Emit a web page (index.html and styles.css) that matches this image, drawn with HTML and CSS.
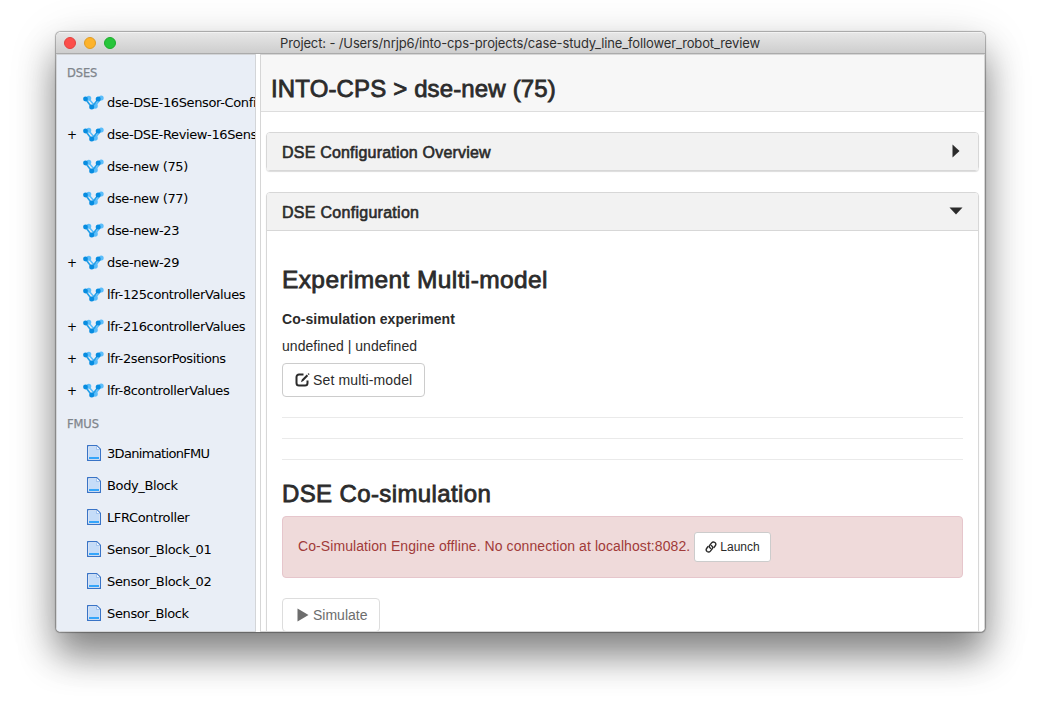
FILE: index.html
```html
<!DOCTYPE html>
<html lang="en">
<head>
<meta charset="utf-8">
<title>INTO-CPS</title>
<link rel="stylesheet" href="styles.css">
</head>
<body>
<svg class="defs" width="0" height="0">
  <symbol id="dse" viewBox="0 0 22 18">
    <g fill="#5bbdfa" stroke="#5bbdfa" stroke-width="1.6">
      <path d="M6.5 4.5 13 12 19.500 4" fill="none"/>
      <circle cx="6.800" cy="4.300" r="1.700"/><circle cx="19.200" cy="4" r="1.700"/><circle cx="13" cy="12" r="2"/>
    </g>
    <path d="M3.500 5 9.700 13.200 16.300 5" fill="none" stroke="#249fe8" stroke-width="1.700"/>
    <g fill="#078ce0"><circle cx="3.500" cy="5" r="2.400"/><circle cx="16.200" cy="4.900" r="2.500"/><circle cx="9.700" cy="13.100" r="2.500"/></g>
  </symbol>
  <symbol id="file" viewBox="0 0 14 16">
    <path d="M.6.6h9.200l3.600 3.600v11.200H.6z" fill="#fff" stroke="#3973c6" stroke-width="1.200" stroke-linejoin="round"/>
    <path d="M2 2h7l3 3v9H2z" fill="#c5dcf8"/>
    <path d="M9.500 1v3.500H13" fill="#eef6ff" stroke="#8db4e8" stroke-width=".7"/>
    <path d="M2 12h10v2H2z" fill="#35a5fa"/>
  </symbol>
</svg>
<div class="window">
  <header class="titlebar">
    <i class="light red"></i><i class="light yellow"></i><i class="light green"></i>
    <span class="title">Project: - /Users/nrjp6/into-cps-projects/case-study_line_follower_robot_review</span>
  </header>
  <div class="body">
    <nav class="sidebar">
      <h5 class="group">DSES</h5>
      <ul class="tree">
        <li><b></b><svg class="dse"><use href="#dse"/></svg><span>dse-DSE-16Sensor-Config</span></li>
        <li><b>+</b><svg class="dse"><use href="#dse"/></svg><span>dse-DSE-Review-16Sensor</span></li>
        <li><b></b><svg class="dse"><use href="#dse"/></svg><span>dse-new (75)</span></li>
        <li><b></b><svg class="dse"><use href="#dse"/></svg><span>dse-new (77)</span></li>
        <li><b></b><svg class="dse"><use href="#dse"/></svg><span>dse-new-23</span></li>
        <li><b>+</b><svg class="dse"><use href="#dse"/></svg><span>dse-new-29</span></li>
        <li><b></b><svg class="dse"><use href="#dse"/></svg><span>lfr-125controllerValues</span></li>
        <li><b>+</b><svg class="dse"><use href="#dse"/></svg><span>lfr-216controllerValues</span></li>
        <li><b>+</b><svg class="dse"><use href="#dse"/></svg><span>lfr-2sensorPositions</span></li>
        <li><b>+</b><svg class="dse"><use href="#dse"/></svg><span>lfr-8controllerValues</span></li>
      </ul>
      <h5 class="group">FMUS</h5>
      <ul class="tree">
        <li><b></b><svg class="file"><use href="#file"/></svg><span class="tight">3DanimationFMU</span></li>
        <li><b></b><svg class="file"><use href="#file"/></svg><span>Body_Block</span></li>
        <li><b></b><svg class="file"><use href="#file"/></svg><span>LFRController</span></li>
        <li><b></b><svg class="file"><use href="#file"/></svg><span class="loose">Sensor_Block_01</span></li>
        <li><b></b><svg class="file"><use href="#file"/></svg><span class="loose">Sensor_Block_02</span></li>
        <li><b></b><svg class="file"><use href="#file"/></svg><span>Sensor_Block</span></li>
      </ul>
    </nav>
    <main class="main">
      <div class="crumb"><h1 class="heading crumb-text">INTO-CPS &gt; dse-new (75)</h1></div>
      <section class="panel closed">
        <div class="panel-head"><h4 class="overview">DSE Configuration Overview</h4><svg class="caret" viewBox="0 0 14 14"><path d="M3.500 .5 10.500 7 3.500 13.500z"/></svg></div>
      </section>
      <section class="panel open">
        <div class="panel-head"><h4 class="config">DSE Configuration</h4><svg class="caret" viewBox="0 0 14 14"><path d="M.5 3.500h13L7 10.500z"/></svg></div>
        <div class="panel-body">
          <h3 class="heading experiment">Experiment Multi-model</h3>
          <p class="label">Co-simulation experiment</p>
          <p class="value">undefined | undefined</p>
          <button class="btn set"><svg width="15" height="14" viewBox="0 0 15 14"><path d="M8.500 1.500H4A2.500 2.500 0 0 0 1.500 4v6A2.500 2.500 0 0 0 4 12.500h6a2.500 2.500 0 0 0 2.500-2.500V7.500" fill="none" stroke="#2b2b2b" stroke-width="2"/><path d="m6 9.200.8-2.800 4.900-4.900 1.500 1.500-4.900 4.900zM12.600.9l.5-.5q.4-.3.8 0l.4.4q.4.400 0 .8l-.5.500z" fill="#2b2b2b"/></svg><span>Set multi-model</span></button>
          <hr><hr><hr>
          <h3 class="heading cosim">DSE Co-simulation</h3>
          <div class="alert">
            <span class="alert-text">Co-Simulation Engine offline. No connection at localhost:8082.</span>
            <button class="btn small"><svg width="12" height="12" viewBox="0 0 12 12" fill="none" stroke="#2b2b2b" stroke-width="1.400" stroke-linecap="round"><path d="M5.600 7.300Q3.500 5.900 4.800 4.200L6.600 1.900Q8 .3 9.900 1.500 11.500 2.800 10.400 4.500L8.900 6.500"/><path d="M6.400 4.700Q8.500 6.100 7.200 7.800L5.400 10.100Q4 11.700 2.100 10.500.5 9.200 1.600 7.500L3.100 5.500"/></svg><span>Launch</span></button>
          </div>
          <button class="btn disabled"><svg width="12" height="14" viewBox="0 0 12 14"><path d="M.5.500 11.500 7 .5 13.500z" fill="#6d6d6d"/></svg><span>Simulate</span></button>
        </div>
      </section>
    </main>
  </div>
</div>
</body>
</html>
```
FILE: styles.css
```css
* { box-sizing: border-box; }
body { margin: 0; width: 1041px; height: 712px; overflow: hidden; padding: 32px 56px 80px; background: #fff; font: 14px/20px "Liberation Sans", Arial, sans-serif; color: #333; }
h1, h3, h4, h5, p, ul { margin: 0; padding: 0; }
.defs { position: absolute; }
.window { width: 929px; height: 600px; border-radius: 5px; overflow: hidden; background: #fff; display: flex; flex-direction: column; box-shadow: 0 0 1px 0.500px rgba(0,0,0,.3), 0 24px 36px rgba(0,0,0,.42), 0 10px 50px rgba(0,0,0,.15); }
.titlebar { height: 22px; flex: none; display: flex; align-items: center; gap: 8px; padding-left: 8px; background: linear-gradient(#e6e6e6, #cecece); border-top: 1px solid #f2f2f2; border-bottom: 1px solid #ababab; }
.light { width: 12px; height: 12px; border-radius: 50%; border: 1px solid; }
.red { background: #fc4f4b; border-color: #e14340; }
.yellow { background: #fdb32b; border-color: #df9c25; }
.green { background: #27c53b; border-color: #1dac2c; }
.title { font: 13px/20px Inter, sans-serif; letter-spacing: -.13px; color: #2f2f2f; margin-left: 156px; white-space: nowrap; }
.body { flex: 1; min-height: 0; display: flex; gap: 4px; }
.sidebar { width: 200px; flex: none; overflow: hidden; background: #e9eef6; border: 1px solid #d3d5d8; font: 13px/32px "DejaVu Sans", Verdana, sans-serif; color: #000; }
.group { height: 31px; padding: 3px 0 0 10px; font: 11.500px/30px "DejaVu Sans", Verdana, sans-serif; letter-spacing: -.1px; color: #7f858c; -webkit-text-stroke: .25px #7f858c; }
.tree { list-style: none; }
.sidebar .tree:first-of-type { padding-top: 1px; }
.tree + .group { margin-top: -1px; height: 32px; }
.tree li { display: flex; align-items: center; height: 32px; white-space: nowrap; }
.tree b { width: 25px; flex: none; padding-left: 10px; font-weight: 400; font-size: 12px; }
.tree svg { flex: none; }
.tree span { letter-spacing: -.37px; }
.tree .tight { letter-spacing: -.67px; }
.tree .loose { letter-spacing: -.32px; }
.dse { width: 22px; height: 18px; margin-right: 3px; }
.file { width: 14px; height: 16px; margin: 0 6px 2px 5px; }
.main { flex: 1; min-width: 0; overflow: hidden; border: 1px solid #d6d6d6; }
.crumb { height: 57px; background: #f7f7f7; border-bottom: 1px solid #ddd; padding: 20px 0 0 10px; }
.heading { font-size: 24px; line-height: 28px; font-weight: 400; color: #2b2b2b; -webkit-text-stroke: .8px #2b2b2b; white-space: nowrap; }
.crumb-text { letter-spacing: .14px; }
.experiment { font-size: 24.500px; letter-spacing: .39px; }
.cosim { letter-spacing: .38px; }
.panel { margin: 20px 5px 0; border: 1px solid #d7d7d7; border-radius: 4px; box-shadow: 0 1px 1px rgba(0,0,0,.14); }
.open { margin-top: 21px; }
.panel-head { height: 37px; display: flex; align-items: center; justify-content: space-between; padding: 0 15px; background: #f2f2f2; border-radius: 3px 3px 0 0; }
.panel-head + .panel-body { border-top: 1px solid #d7d7d7; }
.panel-head h4 { padding-top: 2px; font-size: 16px; line-height: 20px; font-weight: 400; color: #2b2b2b; -webkit-text-stroke: .6px #2b2b2b; }
.overview { letter-spacing: .2px; }
.config { letter-spacing: .28px; }
.caret { width: 14px; height: 14px; margin-bottom: 2px; fill: #2b2b2b; }
.panel-body { padding: 35px 15px 15px; height: 460px; }
.label { margin-top: 15px; font-weight: 700; font-size: 14px; letter-spacing: .04px; color: #2b2b2b; }
.value { margin-top: 7px; letter-spacing: .03px; color: #2b2b2b; }
.btn { display: flex; align-items: center; height: 34px; border: 1px solid #ccc; border-radius: 4px; background: #fff; color: #2b2b2b; font: 14px/20px "Liberation Sans", Arial, sans-serif; white-space: nowrap; }
.set { width: 143px; margin-top: 7px; padding: 0 0 0 12px; gap: 3px; letter-spacing: .14px; }
hr { height: 1px; border: 0; background: #eaeaea; margin: 20px 0; }
.cosim { margin-top: 19px; }
.alert { margin-top: 8px; height: 62px; padding: 0 15px; display: flex; align-items: center; gap: 4px; background: #efdada; border: 1px solid #e6c6cc; border-radius: 4px; color: #a13b39; }
.alert-text { letter-spacing: .08px; padding-bottom: 2px; }
.small { width: 77px; height: 30px; font-size: 12px; padding: 0 0 0 10px; gap: 3px; border-radius: 3px; }
.disabled { width: 98px; margin-top: 20px; padding: 0 0 0 14px; gap: 4px; color: #6d6d6d; border-color: #ddd; }
```
